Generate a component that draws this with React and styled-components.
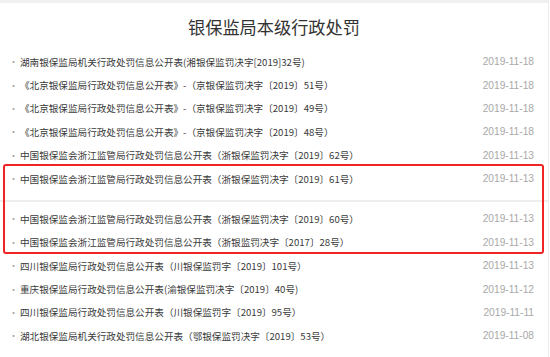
import React from 'react';
import styled, { createGlobalStyle } from 'styled-components';

const GlobalStyle = createGlobalStyle`
  body {
    margin: 0;
    background: #ffffff;
    font-family: "Noto Sans CJK SC", "Liberation Sans", sans-serif;
  }
`;

const Page = styled.div`
  position: relative;
  width: 549px;
  height: 357px;
  overflow: hidden;
  border-top: 3px solid #f0f0f0;
  border-right: 1px solid #ececec;
  box-sizing: border-box;
`;

const Title = styled.h1`
  margin: 0;
  height: 47px;
  display: flex;
  align-items: center;
  justify-content: center;
  font-size: 17.2px;
  font-weight: 400;
  color: #333333;
`;

const Group = styled.ul`
  margin: 0;
  padding: ${({ $first }) => ($first ? '0 0 9.6px' : '5.3px 0 0')};
  list-style: none;
  border-top: ${({ $first }) => ($first ? 'none' : '2px solid #eeeeee')};
`;

const Row = styled.li`
  height: 23.4px;
  display: flex;
  align-items: center;
  padding: 0 14px 0 9px;
`;

const Bullet = styled.span`
  width: 11px;
  font-size: 9px;
  color: #a0a0a0;
`;

const Link = styled.span`
  flex: 1;
  font-size: 9.6px;
  color: #3a3a3a;
  white-space: nowrap;
`;

const Date = styled.span`
  font-family: "Liberation Sans", sans-serif;
  font-size: 10.2px;
  color: #a8a8a8;
`;

const Highlight = styled.div`
  position: absolute;
  left: 3px;
  top: 161px;
  width: 541px;
  height: 90px;
  border: 2px solid #f02424;
  border-radius: 3px;
  box-sizing: border-box;
  pointer-events: none;
`;

const first = [
  ['湖南银保监局机关行政处罚信息公开表(湘银保监罚决字[2019]32号)', '2019-11-18'],
  ['《北京银保监局行政处罚信息公开表》-（京银保监罚决字〔2019〕51号）', '2019-11-18'],
  ['《北京银保监局行政处罚信息公开表》-（京银保监罚决字〔2019〕49号）', '2019-11-18'],
  ['《北京银保监局行政处罚信息公开表》-（京银保监罚决字〔2019〕48号）', '2019-11-18'],
  ['中国银保监会浙江监管局行政处罚信息公开表（浙银保监罚决字〔2019〕62号）', '2019-11-13'],
  ['中国银保监会浙江监管局行政处罚信息公开表（浙银保监罚决字〔2019〕61号）', '2019-11-13'],
];

const second = [
  ['中国银保监会浙江监管局行政处罚信息公开表（浙银保监罚决字〔2019〕60号）', '2019-11-13'],
  ['中国银保监会浙江监管局行政处罚信息公开表（浙银监罚决字〔2017〕28号）', '2019-11-13'],
  ['四川银保监局行政处罚信息公开表（川银保监罚字〔2019〕101号）', '2019-11-13'],
  ['重庆银保监局行政处罚信息公开表(渝银保监罚决字〔2019〕40号)', '2019-11-12'],
  ['四川银保监局行政处罚信息公开表（川银保监罚字〔2019〕95号）', '2019-11-11'],
  ['湖北银保监局机关行政处罚信息公开表（鄂银保监罚决字〔2019〕53号）', '2019-11-08'],
];

function Item({ text, date }) {
  return (
    <Row>
      <Bullet>·</Bullet>
      <Link>{text}</Link>
      <Date>{date}</Date>
    </Row>
  );
}

export default function App() {
  return (
    <>
      <GlobalStyle />
      <Page>
        <Title>银保监局本级行政处罚</Title>
        <Group $first>
          {first.map(([text, date]) => (
            <Item key={text} text={text} date={date} />
          ))}
        </Group>
        <Group>
          {second.map(([text, date]) => (
            <Item key={text} text={text} date={date} />
          ))}
        </Group>
        <Highlight />
      </Page>
    </>
  );
}
